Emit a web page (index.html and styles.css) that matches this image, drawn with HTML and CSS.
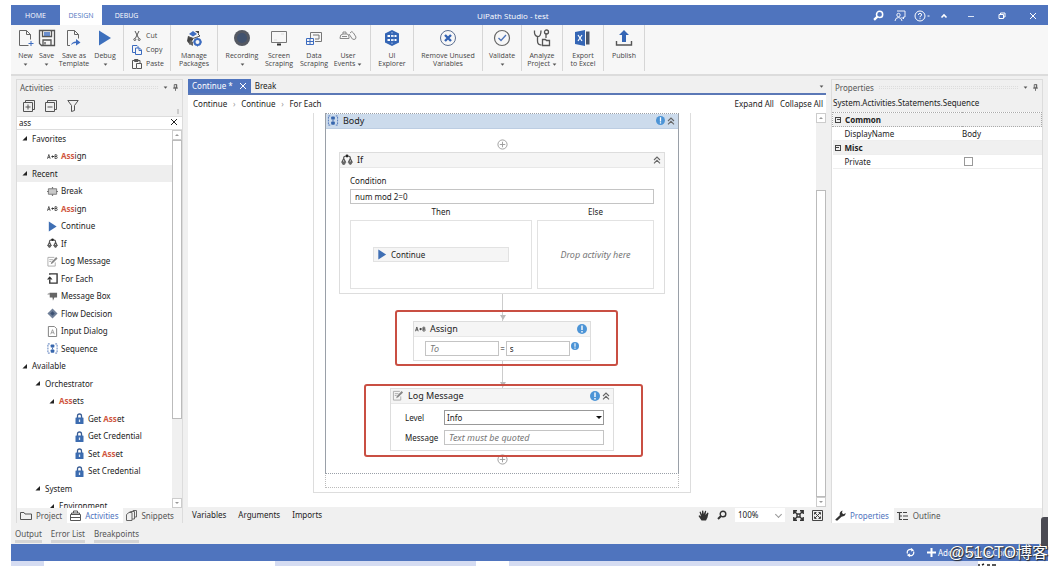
FILE: index.html
```html
<!DOCTYPE html>
<html lang="en">
<head>
<meta charset="utf-8">
<title>UiPath Studio - test</title>
<link rel="stylesheet" href="styles.css">
</head>
<body>
<svg class="defs" aria-hidden="true">
  <symbol id="plus" viewBox="0 0 12 12"><circle cx="6" cy="6" r="5" fill="#fff" stroke="#999"/><path d="M3 6h6M6 3v6" stroke="#999"/></symbol>
  <symbol id="warn" viewBox="0 0 10 10"><circle cx="5" cy="5" r="5" fill="#4c94d6"/><path d="M5 1.500v4.500M5 7v1.400" stroke="#fff" stroke-width="1.400"/></symbol>
  <symbol id="chev" viewBox="0 0 8 8"><path d="M1 4l3-3 3 3M1 7.400l3-3 3 3" fill="none" stroke="#666" stroke-width="1.100"/></symbol>
  <symbol id="down" viewBox="0 0 6 4"><path d="M0.500 0.500h5L3 3.500z" fill="#555"/></symbol>
  <symbol id="pin" viewBox="0 0 6 8"><path d="M1.500 .5h3v4h-3zM0 4.700h6M3 5v3M4 .5v4" fill="none" stroke="#555"/></symbol>
  <symbol id="close" viewBox="0 0 8 8"><path d="M1 1l6 6M7 1L1 7" stroke="currentColor" fill="none"/></symbol>
  <symbol id="caret" viewBox="0 0 6 6"><path d="M6 0v5.500H.5z" fill="#222"/></symbol>
  <symbol id="seq" viewBox="0 0 12 12"><path d="M3 1H1v10h2M9 1h2v10H9" fill="none" stroke="#4d73b8" stroke-dasharray="2 1"/><rect x="4" y="1.500" width="4" height="3.500" rx="1" fill="#3766ad"/><rect x="4" y="7" width="4" height="3.500" rx="1" fill="#3766ad"/><path d="M6 5v2" stroke="#3766ad"/></symbol>
  <symbol id="iff" viewBox="0 0 12 12"><path d="M2.700 5V3.600Q2.700 2 6 2t3.300 1.600V5M2.700 4.500L1 8h3.400zM9.300 4.500L7.600 8H11z" fill="none" stroke="#555" stroke-width="1.200"/><path d="M.6 8h4.200Q4.500 11 2.700 11T.6 8zM7.200 8h4.200Q11 11 9.300 11T7.200 8z" fill="#666"/><circle cx="6" cy="2" r="1.400" fill="#222"/></symbol>
  <symbol id="ab" viewBox="0 0 12 6"><path d="M.5 5.500L2 .8l1.500 4.700M1 4h2M8.700 1v4.200h1.500q1 0 1-1.100T10 3H8.700h1.200q1 0 1-1T10 1z" fill="none" stroke="#444" stroke-width=".9"/><path d="M4.500 3l2-1.500v1h1.200v1H6.500v1z" fill="#333"/></symbol>
  <symbol id="play" viewBox="0 0 10 12"><path d="M1 .5L9.500 6 1 11.500z" fill="#3f6fb4"/></symbol>
  <symbol id="brk" viewBox="0 0 12 10"><path d="M1.500 2h9v6h-9z" fill="#c9c9c9" stroke="#777"/><path d="M6 0v2M6 8v2M0 5h2M10 5h2" stroke="#777" stroke-width="1.300"/></symbol>
  <symbol id="log" viewBox="0 0 12 12"><path d="M8 1.500H1v9.500h8V7" fill="none" stroke="#aaa"/><path d="M2.500 4h4M2.500 6h2" stroke="#aaa"/><path d="M4 9l.8-2.400L10 1.200l1.500 1.400L6.300 8z" fill="#888"/></symbol>
  <symbol id="each" viewBox="0 0 12 12"><path d="M3 2V1h8v10H3V7" fill="none" stroke="#333" stroke-width="1.500"/><path d="M0 7h6L3 3.500z" fill="#333"/></symbol>
  <symbol id="msg" viewBox="0 0 12 10"><path d="M3 1h8v5H8l-1.500 3.500L6 6H3z" fill="#666"/><path d="M0 2.500L3 1v2z" fill="#888"/></symbol>
  <symbol id="flow" viewBox="0 0 12 12"><path d="M6 .5L11.500 6 6 11.500.5 6z" fill="#6f7f98"/><path d="M6 3.500L8.500 6 6 8.500 3.500 6z" fill="#3d5274"/></symbol>
  <symbol id="inp" viewBox="0 0 10 12"><path d="M.5.5h6.500L9.500 3v8.500h-9z" fill="#fff" stroke="#777"/><path d="M3 9l2-5 2 5M3.700 7.300h2.600" fill="none" stroke="#888" stroke-width=".8"/></symbol>
  <symbol id="lock" viewBox="0 0 8 11"><path d="M2 5V3q0-2 2-2t2 2v2" fill="none" stroke="#3a5d94" stroke-width="1.300"/><rect y="4.500" width="8" height="6.500" rx=".6" fill="#3c6cb0"/><path d="M4 6.500v2.500" stroke="#dfe8f5" stroke-width="1.300"/></symbol>
  <symbol id="glass" viewBox="0 0 10 10"><circle cx="6" cy="4" r="2.800" fill="none" stroke="currentColor" stroke-width="1.400"/><path d="M4 6L1 9" stroke="currentColor" stroke-width="2"/></symbol>
</svg>
<div class="app">
  <header class="titlebar">
    <nav class="menu">
      <button>HOME</button><button class="active">DESIGN</button><button>DEBUG</button>
    </nav>
    <h1>UiPath Studio - test</h1>
    <div class="window-tools">
      <button aria-label="Search"><svg width="11" height="11"><use href="#glass"/></svg></button>
      <button aria-label="Feedback"><svg width="12" height="12" viewBox="0 0 12 12" fill="none" stroke="#fff" stroke-width=".9"><path d="M3 1h8v6H9.500v2L7.500 7"/><circle cx="4.500" cy="5" r="1.700"/><path d="M1 11q.4-3.500 3.500-3.500T8 11"/></svg></button>
      <button aria-label="Help"><svg width="16" height="12" viewBox="0 0 16 12" fill="none" stroke="#fff"><circle cx="6" cy="6" r="5"/><path d="M4.400 5q0-1.700 1.600-1.700T7.600 5Q7.600 5.800 6 6.500v.8M6 8.200v1"/><path d="M13.500 6h2"/></svg></button>
      <button aria-label="Collapse ribbon"><svg width="8" height="6" viewBox="0 0 8 6" fill="none" stroke="#fff" stroke-width="1.600"><path d="M1.500 4.500L4 2l2.500 2.500"/></svg></button>
      <button class="wide" aria-label="Minimize"><svg width="8" height="8" stroke="#dbe5f7"><path d="M1 4.500h6"/></svg></button>
      <button class="wide" aria-label="Restore"><svg width="8" height="8" fill="none" stroke="#fff"><path d="M1 2.500h4.500v4H1zM2.500 2V1h4.500v4H6"/></svg></button>
      <button class="wide" aria-label="Close"><svg width="8" height="8"><use href="#close"/></svg></button>
    </div>
  </header>

  <div class="ribbon">
    <div class="group first">
      <button class="tool w21"><svg width="16" height="18" viewBox="0 0 16 18" fill="none" stroke="#666"><path d="M10.500 16.500h-9v-15h7l4 4v5M8.500 1.500v4h4"/><path d="M13 12v5M10.500 14.500h5" stroke="#3d6cc0"/></svg><span>New</span><svg width="5" height="3"><use href="#down"/></svg></button>
      <button class="tool w21"><svg width="18" height="18" viewBox="0 0 18 18" fill="none" stroke="#555" stroke-width="1.300"><path d="M1.500 1.500h15v15h-13l-2-2zM5 16v-5h8v5"/><path d="M4.500 2v5.500h9V2" /><path d="M6 4h6M6 6h6" stroke="#3d6cc0"/><path d="M7 13v2.500"/></svg><span>Save</span><svg width="5" height="3"><use href="#down"/></svg></button>
      <button class="tool w34"><svg width="16" height="18" viewBox="0 0 16 18" fill="none" stroke="#666"><path d="M4 16.500H1.500v-15h7l4 4v4M8.500 1.500v4h4"/><path d="M5 16q1-3.500 5-3.500V10l4.500 3.500-4.500 3V14q-3 0-5 2z" fill="#3d6cc0" stroke="none"/></svg><span>Save as<br>Template</span></button>
      <button class="tool w28"><svg width="12" height="18" viewBox="0 0 12 18"><path d="M0 1.500L12 9 0 16.500z" fill="#3d70bd"/></svg><span>Debug</span><svg width="5" height="3"><use href="#down"/></svg></button>
    </div>
    <div class="group clipboard">
      <button><svg width="10" height="10" viewBox="0 0 10 10" fill="none" stroke="#555"><path d="M3 0l3.500 7M7 0L3.500 7"/><circle cx="2.800" cy="8.500" r="1"/><circle cx="7.200" cy="8.500" r="1"/></svg>Cut</button>
      <button><svg width="10" height="10" viewBox="0 0 10 10" fill="none" stroke="#3d6cc0"><path d="M3 7.500H.5v-7H5l1 1V3M3.500 3h4L9.500 5v4.500h-6zM7 3v2.500h2.500"/></svg>Copy</button>
      <button><svg width="10" height="10" viewBox="0 0 10 10" fill="none" stroke="#555"><path d="M4 9.500H.5v-8H8V4M2.500.5H6v2H2.500zM4.500 4.500h5v5h-5z"/></svg>Paste</button>
    </div>
    <div class="group">
      <button class="tool w36"><svg width="16" height="18" viewBox="0 0 16 18"><path d="M3 5l4-3 4 3-4 2.500z" fill="#3d6cc0"/><path d="M9 2h4v3M2 7l5 2v2L4 13v3L1 12z" fill="#444"/><path d="M4 11l3 2v4l-4-2z" fill="#666"/><path d="M2.500 8L7 9.500 14 7l-2-2" stroke="#555" fill="none"/><circle cx="11.500" cy="13" r="3" fill="none" stroke="#3d6cc0" stroke-width="2"/><path d="M11.500 8.500v9M7 13h9" stroke="#3d6cc0" stroke-dasharray="1.500 6"/></svg><span>Manage<br>Packages</span></button>
    </div>
    <div class="group">
      <button class="tool w38"><svg width="18" height="18" viewBox="0 0 18 18"><circle cx="9" cy="9" r="8" fill="#555962"/><circle cx="9" cy="9" r="5" fill="#42536f"/></svg><span>Recording</span><svg width="5" height="3"><use href="#down"/></svg></button>
      <button class="tool w36"><svg width="18" height="18" viewBox="0 0 18 18" fill="none" stroke="#777"><path d="M1.500 2.500h15v11h-15z"/><path d="M7 15.500h4" stroke="#333" stroke-width="2"/><path d="M4 11h3M11 5h3" stroke="#ddd"/></svg><span>Screen<br>Scraping</span></button>
      <button class="tool w34"><svg width="18" height="18" viewBox="0 0 18 18" fill="none" stroke="#777"><path d="M5.500 9V3.500h11v9H10M8 6h6v4h-4"/><path d="M1.500 9.500h7v6h-7zM1.500 12.500h7M5 9.500v6" stroke="#3d6cc0"/></svg><span>Data<br>Scraping</span></button>
      <button class="tool w34"><svg width="18" height="18" viewBox="0 0 18 18" fill="none" stroke="#888"><path d="M1 9q0-4 3-4h4q2 0 2 3v1.500H1zM4 5V3h3v2M11 4q2-3 3.500 0l2.500 4q0 2.500-2 2.500T12 8l-2-3"/><path d="M3 7.500h5"/></svg><span>User<br>Events <svg width="5" height="3"><use href="#down"/></svg></span></button>
    </div>
    <div class="group">
      <button class="tool w32"><svg width="16" height="18" viewBox="0 0 16 18"><path d="M8 1l7 3.500v9L8 17l-7-3.500v-9z" fill="#3566b5"/><path d="M3.500 7h9M3.500 11h9" stroke="#fff" stroke-width="2" stroke-dasharray="2.500 1"/><path d="M8 3v12" stroke="#a9c0e6" stroke-dasharray="1.500 2"/></svg><span>UI<br>Explorer</span></button>
    </div>
    <div class="group">
      <button class="tool w58"><svg width="18" height="18" viewBox="0 0 18 18" fill="none"><circle cx="9" cy="9" r="7.500" stroke="#5c6f91"/><path d="M6 6l6 6M12 6l-6 6" stroke="#3362b3" stroke-width="2.400"/></svg><span>Remove Unused<br>Variables</span></button>
    </div>
    <div class="group">
      <button class="tool w28"><svg width="18" height="18" viewBox="0 0 18 18" fill="none"><circle cx="9" cy="9" r="7.500" stroke="#666" stroke-width="1.200"/><path d="M5.500 9l2.500 2.500L13 6" stroke="#4d73b8" stroke-width="1.300"/></svg><span>Validate</span><svg width="5" height="3"><use href="#down"/></svg></button>
    </div>
    <div class="group">
      <button class="tool w30"><svg width="18" height="18" viewBox="0 0 18 18" fill="none" stroke="#555" stroke-width="1.300"><path d="M1.500 1.500Q1 7 4.500 7.500T8 1.500M4.500 7.500V12q0 4 4 4M13 4v5"/><circle cx="13.500" cy="3" r="2"/><path d="M9.500 10.500h3l1 1h3v5h-7z"/></svg><span>Analyze<br>Project <svg width="5" height="3"><use href="#down"/></svg></span></button>
    </div>
    <div class="group">
      <button class="tool w30"><svg width="16" height="18" viewBox="0 0 16 18"><path d="M0 3l10-2v16L0 15z" fill="#3566b5"/><path d="M3 6l4 6M7 6l-4 6" stroke="#fff" stroke-width="1.200"/><path d="M11 2.500h3.500v13H11z" fill="#4a5568"/></svg><span>Export<br>to Excel</span></button>
    </div>
    <div class="group">
      <button class="tool w30"><svg width="18" height="18" viewBox="0 0 18 18"><path d="M9 1l5 5h-3v7H7V6H4z" fill="#3566b5"/><path d="M1.500 12v4h15v-4" fill="none" stroke="#555" stroke-width="1.400"/></svg><span>Publish</span></button>
    </div>
  </div>

  <main class="workspace">
    <aside class="panel activities">
      <div class="panel-head"><h2>Activities</h2><i class="grip"></i><svg width="5" height="3"><use href="#down"/></svg><svg width="5" height="7"><use href="#pin"/></svg></div>
      <div class="panel-tools">
        <button aria-label="Expand all"><svg width="12" height="12" viewBox="0 0 12 12" fill="none" stroke="#555"><path d="M2.500 2.500V.5h9v9h-2M.5 2.500h9v9h-9zM2.500 7h5M5 4.500v5"/></svg></button>
        <button aria-label="Collapse all"><svg width="12" height="12" viewBox="0 0 12 12" fill="none" stroke="#555"><path d="M2.500 2.500V.5h9v9h-2M.5 2.500h9v9h-9zM2.500 7h5"/></svg></button>
        <button aria-label="Filter"><svg width="12" height="12" viewBox="0 0 12 12" fill="none" stroke="#555"><path d="M.8.500h10.400L7.500 5.500v5l-3 1v-6z"/></svg></button>
        <i class="overflow"></i>
      </div>
      <div class="search"><input type="text" value="ass" aria-label="Search activities"><button aria-label="Clear"><svg width="8" height="8"><use href="#close"/></svg></button></div>
      <div class="tree-wrap">
        <ul class="tree">
          <li class="node"><svg class="caret"><use href="#caret"/></svg>Favorites</li>
          <li class="leaf"><svg><use href="#ab"/></svg><span><b>Ass</b>ign</span></li>
          <li class="node selected"><svg class="caret"><use href="#caret"/></svg>Recent</li>
          <li class="leaf"><svg><use href="#brk"/></svg>Break</li>
          <li class="leaf"><svg><use href="#ab"/></svg><span><b>Ass</b>ign</span></li>
          <li class="leaf"><svg><use href="#play"/></svg>Continue</li>
          <li class="leaf"><svg><use href="#iff"/></svg>If</li>
          <li class="leaf"><svg><use href="#log"/></svg>Log Message</li>
          <li class="leaf"><svg><use href="#each"/></svg>For Each</li>
          <li class="leaf"><svg><use href="#msg"/></svg>Message Box</li>
          <li class="leaf"><svg><use href="#flow"/></svg>Flow Decision</li>
          <li class="leaf"><svg><use href="#inp"/></svg>Input Dialog</li>
          <li class="leaf"><svg><use href="#seq"/></svg>Sequence</li>
          <li class="node"><svg class="caret"><use href="#caret"/></svg>Available</li>
          <li class="node l2"><svg class="caret"><use href="#caret"/></svg>Orchestrator</li>
          <li class="node l3"><svg class="caret"><use href="#caret"/></svg><span><b>Ass</b>ets</span></li>
          <li class="leaf deep"><svg><use href="#lock"/></svg><span>Get <b>Ass</b>et</span></li>
          <li class="leaf deep"><svg><use href="#lock"/></svg>Get Credential</li>
          <li class="leaf deep"><svg><use href="#lock"/></svg><span>Set <b>Ass</b>et</span></li>
          <li class="leaf deep"><svg><use href="#lock"/></svg>Set Credential</li>
          <li class="node l2"><svg class="caret"><use href="#caret"/></svg>System</li>
          <li class="node l3"><svg class="caret"><use href="#caret"/></svg>Environment</li>
        </ul>
        <div class="scroll"><i class="cap up"></i><i class="thumb"></i><i class="track"></i><i class="cap"></i></div>
      </div>
      <nav class="dock-tabs">
        <button><svg width="12" height="10" viewBox="0 0 12 10" fill="none" stroke="#555"><path d="M.5 8.500v-7H4l1 1.500h6.500v5.500z"/></svg>Project</button>
        <button class="active"><svg width="11" height="11" viewBox="0 0 11 11" fill="none" stroke="#555"><path d="M.5 4.500h10v6H.5zM1.500 4.500V3h8v1.500M3.500 3V1h4v2M.5 7.500h10"/></svg>Activities</button>
        <button><svg width="11" height="11" viewBox="0 0 11 11" fill="none" stroke="#666"><path d="M.5 4.500L3 2.500h3v8H.5zM3 2.500l2-1h3.500V9H6M6 1.500L7 .5h3.500V7H8.500"/></svg>Snippets</button>
      </nav>
    </aside>

    <section class="designer">
      <div class="doc-tabs">
        <button class="active">Continue *<svg width="8" height="8"><use href="#close"/></svg></button><button>Break</button>
        <svg class="more" width="5" height="3"><use href="#down"/></svg>
      </div>
      <div class="crumbs">
        <a href="#">Continue</a><i>›</i><a href="#">Continue</a><i>›</i><a href="#">For Each</a>
        <span class="fill"></span><button>Expand All</button><button>Collapse All</button>
      </div>
      <div class="canvas-wrap">
        <div class="canvas">
          <div class="outer">
            <div class="sequence">
              <div class="card-head"><svg width="12" height="11"><use href="#seq"/></svg>Body<span class="fill"></span><svg width="9" height="9"><use href="#warn"/></svg><svg width="8" height="8"><use href="#chev"/></svg></div>
              <div class="flow">
                <svg class="add" width="11" height="11"><use href="#plus"/></svg>
                <div class="card if-card">
                  <div class="card-head"><svg width="12" height="12"><use href="#iff"/></svg>If<span class="fill"></span><svg width="8" height="8"><use href="#chev"/></svg></div>
                  <div class="if-body">
                    <label for="cond">Condition</label>
                    <input id="cond" type="text" value="num mod 2=0">
                    <div class="branches">
                      <div class="branch then"><h3>Then</h3><div class="drop"><div class="continue"><svg width="10" height="11"><use href="#play"/></svg>Continue</div></div></div>
                      <div class="branch else"><h3>Else</h3><div class="drop"><em>Drop activity here</em></div></div>
                    </div>
                  </div>
                </div>
                <div class="arrow"></div>
                <div class="card assign-card">
                  <div class="card-head"><svg width="11" height="6"><use href="#ab"/></svg>Assign<span class="fill"></span><svg width="10" height="10"><use href="#warn"/></svg></div>
                  <div class="assign-body"><input type="text" placeholder="To" aria-label="To"><span>=</span><input type="text" value="s" aria-label="Value"><svg width="8" height="8"><use href="#warn"/></svg></div>
                </div>
                <div class="arrow"></div>
                <div class="card log-card">
                  <div class="card-head"><svg width="12" height="11"><use href="#log"/></svg>Log Message<span class="fill"></span><svg width="10" height="10"><use href="#warn"/></svg><svg width="8" height="8"><use href="#chev"/></svg></div>
                  <div class="log-body">
                    <label for="level">Level</label>
                    <div class="combo"><select id="level"><option>Info</option></select></div>
                    <label for="message">Message</label><input id="message" type="text" placeholder="Text must be quoted">
                  </div>
                </div>
                <svg class="add last" width="11" height="11"><use href="#plus"/></svg>
                <div class="mark mark-assign"></div>
                <div class="mark mark-log"></div>
              </div>
            </div>
            <div class="tail"></div>
          </div>
        </div>
        <div class="scroll"><i class="cap up"></i><i class="track"></i><i class="thumb"></i><i class="cap"></i></div>
      </div>
      <div class="canvas-foot">
        <button>Variables</button><button>Arguments</button><button>Imports</button><span class="fill"></span>
        <button aria-label="Pan"><svg width="11" height="11" viewBox="0 0 11 11"><path d="M3.500 10.500L.5 6l1-.8L3 6.500 1.500 2l1-.4L4 4.500 4 .7 5.200.5 5.800 4 7.200.8l1 .3L7.500 5 9.500 2.500l1 .5L9.500 7.500l-1.500 3z" fill="#333"/></svg></button>
        <button aria-label="Zoom"><svg class="ink" width="10" height="10"><use href="#glass"/></svg></button>
        <div class="combo zoom"><select aria-label="Zoom level"><option>100%</option></select></div>
        <button aria-label="Fit to screen"><svg width="11" height="11" viewBox="0 0 11 11" stroke="#333" fill="none" stroke-width="1.400"><path d="M.8 4V.8H4M7 .8h3.200V4M10.200 7v3.200H7M4 10.200H.8V7M1 1l3 3M10 1L7 4M10 10L7 7M1 10l3-3M4 4h3v3H4z"/></svg></button>
        <button aria-label="Overview"><svg width="11" height="11" viewBox="0 0 11 11" stroke="#444" fill="none"><path d="M.5.500h10v10H.5zM2.500 4.500v-2h2M6.500 2.500h2v2M8.500 6.500v2h-2M4.500 8.500h-2v-2M3 3l5 5M8 3L3 8" /></svg></button>
      </div>
    </section>

    <aside class="panel properties">
      <div class="panel-head"><h2>Properties</h2><i class="grip"></i><svg width="5" height="3"><use href="#down"/></svg><svg width="5" height="7"><use href="#pin"/></svg></div>
      <div class="type">System.Activities.Statements.Sequence</div>
      <table>
        <tbody>
          <tr class="cat focus"><th colspan="2"><i class="box"></i>Common</th></tr>
          <tr><th>DisplayName</th><td>Body</td></tr>
          <tr class="cat"><th colspan="2"><i class="box"></i>Misc</th></tr>
          <tr><th><label for="private">Private</label></th><td><input id="private" type="checkbox"></td></tr>
        </tbody>
      </table>
      <div class="blank"></div>
      <nav class="dock-tabs">
        <button class="active"><svg width="11" height="11" viewBox="0 0 11 11"><path d="M1 10.500L.3 9.500l4.500-4.300Q4 2 7.500.5L7 3l1.500 1.200 2.200-1.100Q10.500 6.500 6.500 6.800L2.500 10.500z" fill="#333"/></svg>Properties</button>
        <button><svg width="12" height="10" viewBox="0 0 12 10" fill="none" stroke="#444"><path d="M0 1.500h5M2.500 2v7M3 5h2M3 8.500h2M6 5h5M6 8.500h5M6 1.500h4" stroke-width="1.200"/></svg>Outline</button>
      </nav>
    </aside>
  </main>

  <nav class="output"><button>Output</button><button>Error List</button><button>Breakpoints</button></nav>
  <footer class="status">
    <svg width="9" height="9" viewBox="0 0 9 9" fill="none" stroke="#fff" stroke-width="1.200"><path d="M1.500 5.500a3 3 0 0 1 4.500-3.600M7.500 3.500A3 3 0 0 1 3 7.100"/><path d="M5 .5l2 1.700L5 3M4 6L2 7l2 1.500"/></svg>
    <button><svg width="9" height="9"><path d="M4.500 0v9M0 4.500h9" stroke="#fff" stroke-width="2"/></svg>Add to Source Control</button>
  </footer>
  <div class="taskbar"><i></i><i></i><i></i><svg width="20" height="3" stroke="#222" stroke-width="1.500"><path d="M0 2h2M4 2l2-1M9 2h3M14 2h4"/></svg></div>
  <i class="side-handle"></i>
  <div class="watermark">@51CTO博客</div>
</div>
</body>
</html>
```
FILE: styles.css
```css
* { box-sizing: border-box; }
body { margin: 0; background: #fff; font: 8px/12px "Noto Sans", "Open Sans", "Noto Sans CJK SC", sans-serif; color: #222; }
button, input, select { font: inherit; color: inherit; border: 0; padding: 0; margin: 0; background: none; border-radius: 0; min-width: 0; outline: 0; }
button { white-space: nowrap; }
h1, h2, h3 { margin: 0; font: inherit; }
a { color: inherit; text-decoration: none; }
svg { flex: none; }
.defs { position: absolute; width: 0; height: 0; }
.fill { flex: 1; }

.app { position: relative; display: flex; flex-direction: column; min-height: 100vh; padding: 5px 10px 4px 11px; }

.titlebar { display: grid; grid-template-columns: 14fr auto 15fr; align-items: stretch; height: 20px; background: #4f74be; color: #fff; font-family: "Open Sans", sans-serif; }
.titlebar h1 { line-height: 21px; }
.menu { display: flex; font-size: 7px; }
.menu button { width: 49px; }
.menu .active { width: 42px; background: #fff; color: #4f74be; }
.window-tools { display: flex; justify-content: flex-end; align-items: center; }
.window-tools button { display: flex; justify-content: center; width: 22px; }
.window-tools .wide { width: 31px; }

.ribbon { display: flex; height: 51px; padding-bottom: 3px; background: #f7f7f7; border-bottom: 2px solid #dcdcdc; font: 7px/8px "Open Sans", sans-serif; color: #444; }
.group { display: flex; padding: 4px 5px 0; border-right: 1px solid #d6d6d6; }
.group.first { padding: 4px 4px 0; }
.tool { display: flex; flex-direction: column; align-items: center; }
.tool span { margin: 5px 0 3px; }
.w21 { width: 21px; }
.w28 { width: 28px; }
.w30 { width: 30px; }
.w32 { width: 32px; }
.w34 { width: 34px; }
.w36 { width: 36px; }
.w38 { width: 38px; }
.w58 { width: 58px; }
.group.clipboard { flex-direction: column; width: 47px; padding: 4px 8px 0; }
.clipboard button { display: flex; align-items: center; gap: 4px; height: 15px; }

.workspace { flex: 1; display: flex; gap: 5px; padding: 3px 5px 0; background: #f0f0f0; }
.panel { display: flex; flex-direction: column; border: 1px solid #dcdcdc; border-bottom: 0; }
.activities { width: 167px; }
.properties { width: 212px; }
.panel-head { display: flex; align-items: center; gap: 5px; height: 15px; padding: 0 4px 0 3px; color: #555; }
.grip { flex: 1; height: 3px; border-top: 1px dotted #ddd; border-bottom: 1px dotted #ddd; }
.panel-tools { display: flex; align-items: center; gap: 10px; height: 21px; padding: 0 3px 0 6px; }
.panel-tools button { display: flex; }
.overflow { width: 2px; height: 5px; margin: 12px 0 0 auto; background: #ccc; }
.search { display: flex; height: 14px; padding: 0 4px 0 2px; background: #fff; border: 1px solid #ddd; border-width: 1px 0; }
.search input { flex: 1; }

.tree-wrap { flex: 1 1 0px; min-height: 0; display: flex; background: #fff; overflow: hidden; }
.tree { flex: 1; margin: 0; padding: 0; list-style: none; overflow: hidden; }
.tree li { display: flex; align-items: center; height: 17px; }
.tree li:nth-child(even) { height: 18px; }
.tree b { color: #d0583f; }
.node { gap: 5px; padding-left: 5px; }
.l2 { padding-left: 18px; }
.l3 { padding-left: 32px; }
.caret { width: 5px; height: 5px; }
.selected { background: #eee; }
.leaf { gap: 3px; padding-left: 30px; }
.leaf svg { width: 11px; height: 11px; }
.deep { padding-left: 57px; }

.scroll { display: flex; flex-direction: column; width: 10px; background: #f0f0f0; }
.cap { display: flex; align-items: center; justify-content: center; flex: none; height: 10px; border: 1px solid #ccc; background: #fff; }
.cap::after { content: ""; border: 2px solid transparent; border-top-color: #999; border-bottom: 0; }
.cap.up::after { border-bottom: 2px solid #999; border-top: 0; }
.thumb { border: 1px solid #bbb; background: #fff; flex: 7; }
.track { flex: 2; }
.canvas-wrap .track { flex: 0 0 67px; }

.dock-tabs { display: flex; align-items: center; height: 15px; color: #555; }
.dock-tabs button { display: flex; align-items: center; gap: 4px; height: 15px; padding: 0 5px 0 3px; }
.dock-tabs .active { background: #fff; color: #4f74be; }

.designer { flex: 1; display: flex; flex-direction: column; min-width: 0; }
.doc-tabs { display: flex; align-items: center; height: 16px; border-bottom: 2px solid #5b78b6; }
.doc-tabs button { display: flex; align-items: center; gap: 6px; height: 14px; padding: 0 4px; }
.doc-tabs .active { background: #4f74be; color: #fff; }
.more { margin-left: auto; margin-right: 2px; }
.crumbs { display: flex; align-items: center; height: 18px; padding: 0 3px 0 5px; background: #fff; }
.crumbs i { width: 14px; text-align: center; color: #999; font-style: normal; }
.crumbs button + button { margin-left: 6px; }

.canvas-wrap { flex: 1; display: flex; background: #fff; }
.canvas { flex: 1; display: flex; justify-content: center; align-items: flex-start; }
.outer { width: 378px; padding: 0 11px 4px; border: 1px solid #ddd; border-top: 0; }
.sequence { border: 1px solid #9aa0a8; border-bottom-style: dotted; border-top-style: dotted; }
.card-head { display: flex; align-items: center; gap: 4px; height: 15px; padding: 0 3px 1px 1px; background: #f5f5f5; border-bottom: 1px solid #e8e8e8; font-size: 9px; }
.card-head .fill + svg + svg { margin-left: -2px; }
.sequence > .card-head { background: #ccdbec; border-bottom-color: #bccde2; }
.tail { height: 13px; margin-top: 1px; border: 1px dotted #bbb; border-top: 0; }
.flow { position: relative; display: flex; flex-direction: column; align-items: center; padding: 10px 0 8px; }
.add { display: block; }
.add.last { margin-top: 3px; }
.card { border: 1px solid #ddd; background: #fff; }
.card input, .card select { height: 15px; padding: 0 4px; border: 1px solid #c4c4c4; background: #fff; }
.card input::placeholder, .drop em { color: #777; font-size: 9px; font-style: italic; opacity: 1; }
.if-card { width: 326px; margin-top: 2px; }
.if-body { display: flex; flex-direction: column; padding: 7px 10px 4px; }
.if-body > label { margin-bottom: 2px; }
.branches { display: grid; grid-template-columns: 182fr 117fr; gap: 5px; margin-top: 2px; }
.branch h3 { text-align: center; line-height: 12px; margin-bottom: 2px; }
.drop { display: flex; align-items: center; justify-content: center; height: 69px; border: 1px solid #e2e2e2; }
.continue { display: flex; align-items: center; gap: 4px; width: 136px; height: 15px; padding-left: 3px; border: 1px solid #e2e2e2; background: #f5f5f5; }
.arrow { position: relative; width: 1px; height: 27px; background: #ccc; }
.arrow::after { content: ""; position: absolute; bottom: 1px; left: -2px; border: 3px solid transparent; border-top: 5px solid #bbb; border-bottom: 0; }
.assign-card { width: 178px; }
.assign-body { display: flex; align-items: flex-start; gap: 1px; padding: 4px 11px; }
.assign-body input { width: 75px; }
.assign-body input + span + input { width: 65px; padding-left: 3px; }
.assign-body svg { margin-top: 1px; }
.assign-body span { line-height: 15px; }
.log-card { width: 224px; }
.log-body { display: grid; grid-template-columns: 36px 160px; column-gap: 3px; row-gap: 5px; align-items: center; padding: 6px 14px 5px; }
.combo { position: relative; display: flex; }
.combo select { flex: 1; appearance: none; padding: 0 2px; border-color: #999; }
.combo::after { content: ""; position: absolute; top: 6px; right: 2px; border: 3px solid transparent; border-top-color: #111; border-bottom: 0; pointer-events: none; }
.mark { position: absolute; border: 2px solid #c94f43; border-radius: 3px; }
.mark-assign { top: 181px; left: 69px; width: 223px; height: 56px; }
.mark-log { top: 255px; left: 38px; width: 279px; height: 73px; }

.canvas-foot { display: flex; align-items: center; gap: 12px; height: 16px; padding: 0 3px 0 4px; }
.canvas-foot button { display: flex; }
.canvas-foot button[aria-label] + button { margin-left: -4px; }
.zoom { width: 50px; margin: 0 -4px; }
.zoom select { height: 14px; padding: 0 3px; background: #fff; }
.zoom::after { top: 4px; right: 4px; width: 4px; height: 4px; border: solid #999; border-width: 0 1px 1px 0; transform: rotate(45deg); }
.ink { color: #333; }

.type { height: 17px; padding: 2px 1px; }
.properties table { width: 100%; border-collapse: collapse; background: #fff; }
.properties tr { height: 14px; }
.properties th { padding: 0 0 0 12px; width: 62%; text-align: left; font-weight: 400; border-bottom: 1px solid #eee; }
.properties td { padding: 0; border-bottom: 1px solid #eee; }
.properties .cat th { padding: 0 2px; font-weight: 700; background: #f0f0f0; }
.properties .focus th { border: 1px dotted #aaa; }
.box { display: inline-block; width: 6px; height: 6px; margin-right: 4px; border: 1px solid #444; background: linear-gradient(#444, #444) center / 3px 1px no-repeat; }
.properties input { display: block; appearance: none; width: 9px; height: 9px; margin-left: 2px; border: 1px solid #999; background: #fff; }
.blank { flex: 1; background: #fff; }

.output { display: flex; gap: 9px; height: 21px; padding: 4px 4px 0; background: #f0f0f0; color: #555; }
.output button { height: 16px; border-bottom: 3px solid #d5d5d5; }
.status { display: flex; align-items: center; justify-content: flex-end; gap: 12px; height: 17px; padding-right: 29px; background: #4f74be; color: #fff; }
.status button { display: flex; align-items: center; gap: 2px; width: 92px; overflow: hidden; }
.taskbar { display: flex; height: 5px; padding-right: 50px; }
.taskbar i { width: 33px; background: #d5dcf2; }
.taskbar i + i { width: 201px; margin-left: 231px; }
.taskbar i + i + i { flex: 1; margin-left: 33px; }
.taskbar svg { margin-top: 2px; }
.side-handle { position: absolute; right: 10px; bottom: 23px; width: 7px; height: 30px; background: #4a4a52; border-radius: 3px 0 0 0; }
.watermark { position: absolute; right: 10px; bottom: 7px; font: 16px/20px "Liberation Sans", "Noto Sans CJK SC", sans-serif; color: #fff; text-shadow: 1px 1px 1px #222, 0 0 1px #222; }
```
